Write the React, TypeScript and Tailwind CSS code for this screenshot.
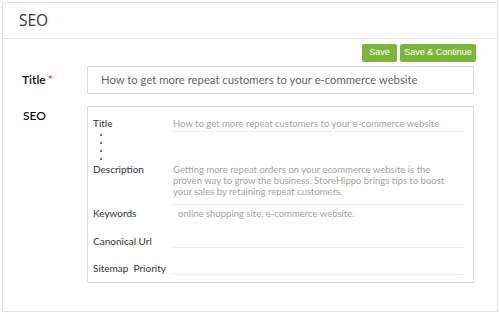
export default function App() {
  const label = "w-[80px] shrink-0 text-[10px] leading-[11px] text-[#333]";
  const field = "w-[290px] border-b border-[#ebebeb] text-[9.5px] leading-[11px] text-[#a3a3a3]";

  return (
    <div className="h-[314px] w-[500px] bg-white pl-[2px] pt-[2px] font-['Lato',sans-serif]">
      <div className="h-[310px] w-[496px] border border-[#e3e3e3]">
        {/* Header */}
        <div className="flex h-[36px] items-center border-b border-[#e6e6e6] pl-[16px]">
          <span className="font-['Open_Sans',sans-serif] text-[15.5px] text-[#333]">SEO</span>
        </div>

        {/* Actions */}
        <div className="mt-[5px] flex justify-end gap-[3px] pr-[21px]">
          <button
            type="button"
            className="h-[18px] w-[35px] rounded-[2px] bg-[#7db53c] font-['Liberation_Sans',sans-serif] text-[9px] text-white"
          >
            Save
          </button>
          <button
            type="button"
            className="h-[18px] w-[76px] rounded-[2px] bg-[#7db53c] font-['Liberation_Sans',sans-serif] text-[9px] text-white"
          >
            Save &amp; Continue
          </button>
        </div>

        {/* Title */}
        <div className="mt-[4px] flex items-center">
          <div className="w-[84px] pl-[19px] text-[12px] font-semibold text-[#111]">
            Title<span className="ml-[2px] text-[#e53935]">*</span>
          </div>
          <div className="flex h-[28px] w-[387px] items-center border border-[#dcdcdc] pl-[13px] text-[11.3px] text-[#666]">
            How to get more repeat customers to your e-commerce website
          </div>
        </div>

        {/* SEO */}
        <div className="mt-[12px] flex">
          <div className="w-[84px] pl-[20px] pt-[1px] text-[12px] font-semibold text-[#111]">SEO</div>
          <div className="h-[177px] w-[387px] border border-[#dcdcdc] pl-[5px]">
            <div className="mt-[11px] flex">
              <div className={label}>Title</div>
              <div className={`${field} h-[14px]`}>
                How to get more repeat customers to your e-commerce website
              </div>
            </div>

            <div className="ml-[7px] mt-[2px] flex flex-col gap-[6px]">
              {[0, 1, 2, 3].map((i) => (
                <span key={i} className="block h-[2px] w-[2px] rounded-full bg-[#444]" />
              ))}
            </div>

            <div className="mt-[4px] flex">
              <div className={label}>Description</div>
              <div className={`${field} pb-[7px]`}>
                Getting more repeat orders on your ecommerce website is the
                <br />
                proven way to grow the business. StoreHippo brings tips to boost
                <br />
                your sales by retaining repeat customers.
              </div>
            </div>

            <div className="mt-[3px] flex">
              <div className={label}>Keywords</div>
              <div className="w-[290px] pl-[5px] text-[9.5px] leading-[11px] text-[#a3a3a3]">
                online shopping site, e-commerce website.
              </div>
            </div>

            <div className="mt-[17px] flex">
              <div className={label}>Canonical Url</div>
              <div className={`${field} h-[12px]`} />
            </div>

            <div className="mt-[15px] flex">
              <div className={label}>Sitemap&nbsp; Priority</div>
              <div className={`${field} h-[12px]`} />
            </div>
          </div>
        </div>
      </div>
    </div>
  );
}
